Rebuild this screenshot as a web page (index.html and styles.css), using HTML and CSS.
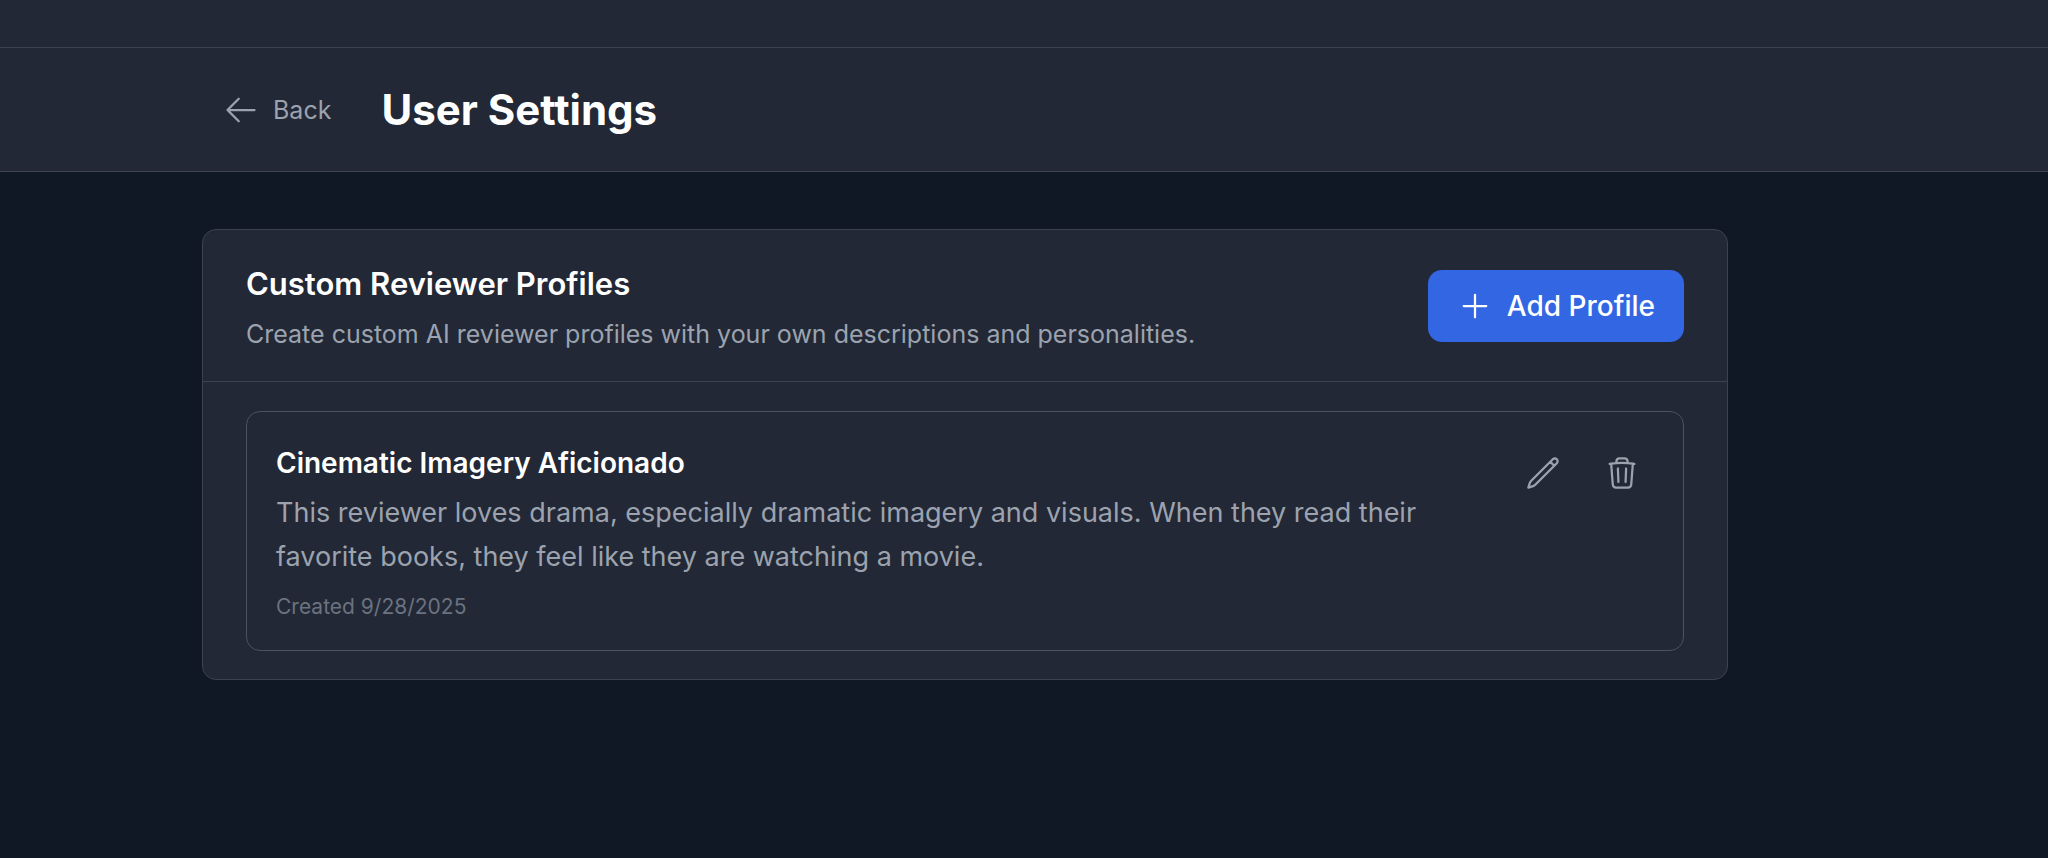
FILE: index.html
```html
<!DOCTYPE html>
<html lang="en">
<head>
<meta charset="utf-8">
<title>User Settings</title>
<link rel="stylesheet" href="styles.css">
</head>
<body>
<div class="topbar"></div>
<header class="page-header">
  <button type="button" class="back">
    <svg class="icon" viewBox="0 0 24 24" aria-hidden="true"><path d="M10.5 19.5 3 12m0 0 7.5-7.5M3 12h18"/></svg>
    Back
  </button>
  <h1 class="page-title">User Settings</h1>
</header>
<main class="content">
  <section class="card">
    <div class="card-header">
      <div>
        <h2 class="card-title">Custom Reviewer Profiles</h2>
        <p class="card-caption">Create custom AI reviewer profiles with your own descriptions and personalities.</p>
      </div>
      <button type="button" class="add">
        <svg class="icon" viewBox="0 0 24 24" aria-hidden="true"><path d="M12 4.5v15m7.5-7.5h-15"/></svg>
        Add Profile
      </button>
    </div>
    <div class="card-body">
      <article class="profile">
        <div class="profile-text">
          <h3 class="profile-name">Cinematic Imagery Aficionado</h3>
          <p class="profile-description">This reviewer loves drama, especially dramatic imagery and visuals. When they read their favorite books, they feel like they are watching a movie.</p>
          <p class="profile-date">Created 9/28/2025</p>
        </div>
        <div class="profile-actions">
          <button type="button" class="icon-button" aria-label="Edit profile">
            <svg class="icon" viewBox="0 0 24 24" aria-hidden="true"><path d="m16.862 4.487 1.687-1.688a1.875 1.875 0 1 1 2.652 2.652L6.832 19.82a4.5 4.5 0 0 1-1.897 1.13l-2.685.8.8-2.685a4.5 4.5 0 0 1 1.13-1.897L16.863 4.487Zm0 0L19.5 7.125"/></svg>
          </button>
          <button type="button" class="icon-button" aria-label="Delete profile">
            <svg class="icon" viewBox="0 0 24 24" aria-hidden="true"><path d="m14.74 9-.346 9m-4.788 0L9.26 9m9.968-3.21c.342.052.682.107 1.022.166m-1.022-.165L18.16 19.673a2.25 2.25 0 0 1-2.244 2.077H8.084a2.25 2.25 0 0 1-2.244-2.077L4.772 5.79m14.456 0a48.108 48.108 0 0 0-3.478-.397m-12 .562c.34-.059.68-.114 1.022-.165m0 0a48.11 48.11 0 0 1 3.478-.397m7.5 0v-.916c0-1.18-.91-2.164-2.09-2.201a51.964 51.964 0 0 0-3.32 0c-1.18.037-2.09 1.022-2.09 2.201v.916m7.5 0a48.667 48.667 0 0 0-7.5 0"/></svg>
          </button>
        </div>
      </article>
    </div>
  </section>
</main>
</body>
</html>
```
FILE: styles.css
```css
* {
  box-sizing: border-box;
}

body {
  margin: 0;
  min-height: 100vh;
  background: #111825;
  color: #ffffff;
  font-family: Inter, "Liberation Sans", sans-serif;
}

h1,
h2,
h3,
p {
  margin: 0;
}

button {
  display: inline-flex;
  align-items: center;
  flex-shrink: 0;
  gap: 14px;
  border: 0;
  background: none;
  font-family: inherit;
  white-space: nowrap;
  cursor: pointer;
}

.icon {
  width: 36px;
  height: 36px;
  flex-shrink: 0;
  fill: none;
  stroke: currentColor;
  stroke-width: 1.5;
  stroke-linecap: round;
  stroke-linejoin: round;
}

.topbar {
  height: 48px;
  background: #222835;
  border-bottom: 1px solid #3c424f;
}

.page-header {
  display: flex;
  align-items: center;
  gap: 36px;
  padding: 29px 320px 29px 209px;
  background: #222835;
  border-bottom: 1px solid #3c424f;
}

.back {
  padding: 0 14px;
  color: #9ca3af;
  font-size: 25px;
  line-height: 36px;
}

.page-title {
  font-size: 42px;
  font-weight: 700;
  line-height: 65px;
}

.content {
  padding: 57px 320px 57px 202px;
}

.card {
  border: 1px solid #3c424f;
  border-radius: 14px;
  background: #222835;
}

.card-header {
  display: flex;
  align-items: center;
  justify-content: space-between;
  gap: 29px;
  padding: 29px 43px;
  border-bottom: 1px solid #3c424f;
}

.card-title {
  margin-bottom: 7px;
  font-size: 31px;
  font-weight: 600;
  line-height: 50px;
}

.card-caption {
  color: #9ca3af;
  font-size: 25px;
  line-height: 36px;
}

.add {
  padding: 14px 29px;
  border-radius: 14px;
  background: #3366e3;
  color: #ffffff;
  font-size: 28px;
  font-weight: 500;
  line-height: 44px;
}

.card-body {
  padding: 29px 43px 28px;
}

.profile {
  display: flex;
  align-items: flex-start;
  justify-content: space-between;
  gap: 29px;
  padding: 29px;
  border: 1px solid #4b5261;
  border-radius: 14px;
}

.profile-name {
  margin-bottom: 6px;
  font-size: 28px;
  font-weight: 600;
  line-height: 44px;
}

.profile-description {
  margin-bottom: 14px;
  color: #9ca3af;
  font-size: 27px;
  line-height: 44px;
}

.profile-date {
  color: #6b7280;
  font-size: 21px;
  line-height: 28px;
}

.profile-actions {
  display: flex;
  gap: 15px;
}

.icon-button {
  padding: 14px;
  color: #9ca3af;
}
```
